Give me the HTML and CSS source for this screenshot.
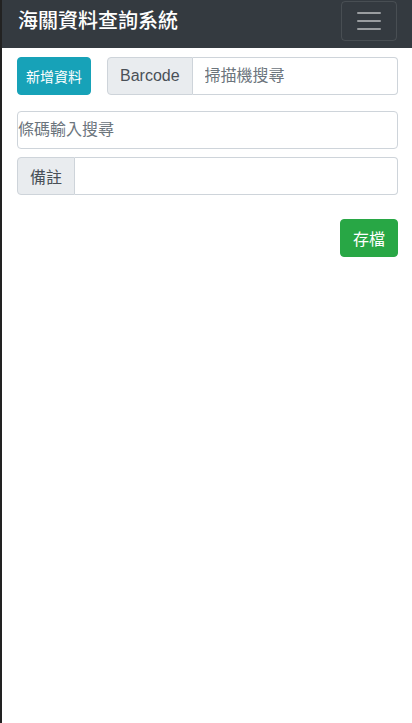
FILE: index.html
```html
<!DOCTYPE html>
<html lang="zh-Hant">
<head>
    <meta charset="UTF-8">
    <meta name="viewport" content="width=device-width, initial-scale=1.0">
    <title>海關資料查詢系統</title>
    <link rel="stylesheet" href="styles.css">
</head>
<body>
    <nav class="navbar">
        <span class="navbar-brand">海關資料查詢系統</span>
        <button type="button" class="navbar-toggler">
            <svg width="30" height="30" viewBox="0 0 30 30">
                <path d="M4 7h22M4 15h22M4 23h22" stroke="rgba(255,255,255,0.5)" stroke-width="2" stroke-linecap="round"/>
            </svg>
        </button>
    </nav>

    <div class="container">
        <div class="row-top">
            <button type="button" class="btn btn-info">新增資料</button>
            <div class="input-group">
                <span class="input-group-text">Barcode</span>
                <input type="text" class="form-control" placeholder="掃描機搜尋">
            </div>
        </div>

        <input type="text" class="form-control search" placeholder="條碼輸入搜尋">

        <div class="input-group">
            <span class="input-group-text">備註</span>
            <input type="text" class="form-control">
        </div>

        <div class="actions">
            <button type="button" class="btn btn-success">存檔</button>
        </div>
    </div>
</body>
</html>
```

FILE: styles.css
```css
body {
    font-family: 'Liberation Sans', 'Noto Sans CJK TC', Arial, sans-serif;
    margin: 0;
    min-height: 723px;
    background-color: #fff;
    border-left: 2px solid #222;
    color: #212529;
    font-size: 16px;
}
.navbar {
    display: flex;
    align-items: center;
    justify-content: space-between;
    height: 40px;
    padding: 1px 15px 7px 16px;
    background-color: #343a40;
}
.navbar-brand {
    color: #fff;
    font-size: 20px;
    font-weight: 500;
    line-height: 30px;
}
.navbar-toggler {
    display: flex;
    align-items: center;
    justify-content: center;
    width: 56px;
    height: 40px;
    padding: 0;
    background: transparent;
    border: 1px solid rgba(255, 255, 255, 0.1);
    border-radius: 4px;
}
.container {
    padding: 9px 14px 0 15px;
    display: flex;
    flex-direction: column;
}
.row-top {
    display: flex;
    gap: 16px;
    margin-bottom: 16px;
}
.row-top .input-group {
    flex: 1;
    min-width: 0;
}
.btn {
    border: 1px solid transparent;
    border-radius: 4px;
    color: #fff;
    font-family: inherit;
    white-space: nowrap;
    cursor: pointer;
}
.btn-info {
    flex: none;
    width: 74px;
    background-color: #17a2b8;
    border-color: #17a2b8;
    font-size: 14px;
    padding: 0;
    height: 38px;
}
.btn-success {
    background-color: #28a745;
    border-color: #28a745;
    font-size: 16px;
    padding: 0 12px;
    height: 38px;
}
.input-group {
    display: flex;
    height: 38px;
}
.input-group-text {
    display: flex;
    align-items: center;
    padding: 0 12px;
    background-color: #e9ecef;
    border: 1px solid #ced4da;
    border-radius: 4px 0 0 4px;
    color: #495057;
    font-size: 16px;
}
.form-control {
    box-sizing: border-box;
    height: 38px;
    padding: 0 12px;
    border: 1px solid #ced4da;
    border-radius: 4px;
    font-family: inherit;
    font-size: 16px;
    color: #495057;
    outline: none;
}
.form-control::placeholder {
    color: #6c757d;
}
.input-group .form-control {
    flex: 1;
    min-width: 0;
    border-left: none;
    border-radius: 0 4px 4px 0;
}
.search {
    width: 100%;
    padding-left: 0;
    margin-bottom: 8px;
}
.actions {
    display: flex;
    justify-content: flex-end;
    margin-top: 24px;
}
```
